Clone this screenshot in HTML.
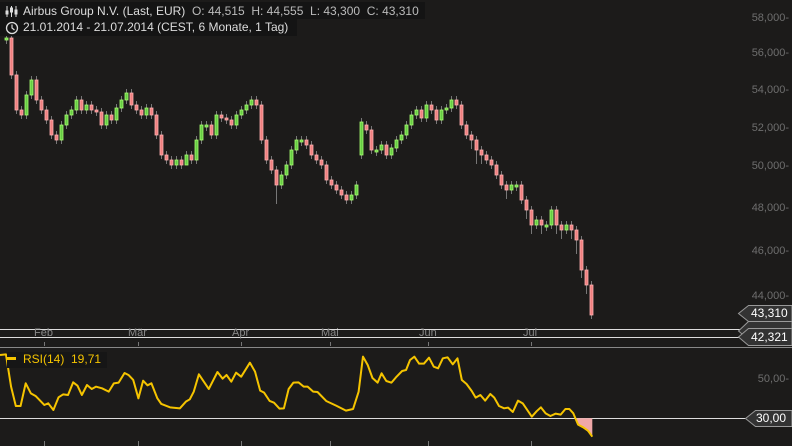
<!DOCTYPE html>
<html><head><meta charset="utf-8"><style>
html,body{margin:0;padding:0;background:#1c1b1a;width:792px;height:446px;overflow:hidden;font-family:"Liberation Sans",sans-serif}
.t{position:absolute;font-size:12px;color:#ddd;white-space:nowrap}
.ax{position:absolute;font-size:11px;color:#6e6e6e;white-space:nowrap}
.g{fill:#66cc44;stroke:#a8ff70;stroke-width:0.8}
.r{fill:#f08080;stroke:#ffb0b0;stroke-width:0.8}
</style></head><body>
<svg width="792" height="446" style="position:absolute;left:0;top:0">
<path stroke="#777" stroke-width="1" fill="none" d="M6.5 34V44M11.5 34V79M16.5 71V114M21.5 106V119M26.5 91V119M31.5 76V99M36.5 76V104M41.5 96V114M46.5 106V124M51.5 116V139M56.5 131V144M61.5 121V144M66.5 111V129M71.5 106V119M76.5 96V114M81.5 96V114M86.5 101V114M91.5 101V114M96.5 106V116M101.5 108V129M106.5 111V129M111.5 111V124M116.5 104V124M121.5 96V112M126.5 89V104M131.5 89V109M136.5 101V114M141.5 106V119M146.5 104V119M151.5 104V119M156.5 111V139M161.5 131V159M166.5 151V164M171.5 156V169M176.5 156V169M181.5 156V169M186.5 151V164M191.5 151V164M196.5 136V164M201.5 121V144M206.5 121V131M211.5 121V139M216.5 111V139M221.5 111V122M226.5 114V124M231.5 116V129M236.5 111V129M241.5 106V119M246.5 101V114M251.5 96V109M256.5 96V109M261.5 101V144M266.5 136V164M271.5 156V174M276.5 166V204M281.5 171V189M286.5 161V179M291.5 146V169M296.5 136V154M301.5 136V146M306.5 136V149M311.5 141V159M316.5 151V164M321.5 156V169M326.5 161V184M331.5 176V189M336.5 181V194M341.5 186V199M346.5 191V204M351.5 191V204M356.5 181V199M361.5 118V159M366.5 121V134M371.5 126V154M376.5 146V156M381.5 141V154M386.5 141V159M391.5 144V159M396.5 136V152M401.5 131V144M406.5 121V139M411.5 111V129M416.5 106V119M421.5 106V122M426.5 101V122M431.5 101V114M436.5 106V124M441.5 106V124M446.5 104V114M451.5 96V112M456.5 96V109M461.5 101V129M466.5 121V139M471.5 131V149M476.5 136V164M481.5 146V164M486.5 151V164M491.5 156V169M496.5 161V179M501.5 171V189M506.5 181V199M511.5 181V194M516.5 181V191M521.5 181V204M526.5 196V219M531.5 206V234M536.5 216V229M541.5 216V234M546.5 221V231M551.5 206V229M556.5 206V234M561.5 221V239M566.5 221V234M571.5 221V239M576.5 226V254M581.5 236V278M586.5 266V294M591.5 281V319"/>
<rect class="g" x="5" y="38" width="3" height="2"/>
<rect class="r" x="10" y="38" width="3" height="37"/>
<rect class="r" x="15" y="75" width="3" height="35"/>
<rect class="r" x="20" y="110" width="3" height="5"/>
<rect class="g" x="25" y="95" width="3" height="20"/>
<rect class="g" x="30" y="80" width="3" height="15"/>
<rect class="r" x="35" y="80" width="3" height="20"/>
<rect class="r" x="40" y="100" width="3" height="10"/>
<rect class="r" x="45" y="110" width="3" height="10"/>
<rect class="r" x="50" y="120" width="3" height="15"/>
<rect class="r" x="55" y="135" width="3" height="5"/>
<rect class="g" x="60" y="125" width="3" height="15"/>
<rect class="g" x="65" y="115" width="3" height="10"/>
<rect class="g" x="70" y="110" width="3" height="5"/>
<rect class="g" x="75" y="100" width="3" height="10"/>
<rect class="r" x="80" y="100" width="3" height="10"/>
<rect class="g" x="85" y="105" width="3" height="5"/>
<rect class="r" x="90" y="105" width="3" height="5"/>
<rect class="r" x="95" y="110" width="3" height="2"/>
<rect class="r" x="100" y="112" width="3" height="13"/>
<rect class="g" x="105" y="115" width="3" height="10"/>
<rect class="r" x="110" y="115" width="3" height="5"/>
<rect class="g" x="115" y="108" width="3" height="12"/>
<rect class="g" x="120" y="100" width="3" height="8"/>
<rect class="g" x="125" y="93" width="3" height="7"/>
<rect class="r" x="130" y="93" width="3" height="12"/>
<rect class="r" x="135" y="105" width="3" height="5"/>
<rect class="r" x="140" y="110" width="3" height="5"/>
<rect class="g" x="145" y="108" width="3" height="7"/>
<rect class="r" x="150" y="108" width="3" height="7"/>
<rect class="r" x="155" y="115" width="3" height="20"/>
<rect class="r" x="160" y="135" width="3" height="20"/>
<rect class="r" x="165" y="155" width="3" height="5"/>
<rect class="r" x="170" y="160" width="3" height="5"/>
<rect class="g" x="175" y="160" width="3" height="5"/>
<rect class="r" x="180" y="160" width="3" height="5"/>
<rect class="g" x="185" y="155" width="3" height="10"/>
<rect class="r" x="190" y="155" width="3" height="5"/>
<rect class="g" x="195" y="140" width="3" height="20"/>
<rect class="g" x="200" y="125" width="3" height="15"/>
<rect class="g" x="205" y="125" width="3" height="2"/>
<rect class="r" x="210" y="125" width="3" height="10"/>
<rect class="g" x="215" y="115" width="3" height="20"/>
<rect class="r" x="220" y="115" width="3" height="3"/>
<rect class="r" x="225" y="118" width="3" height="2"/>
<rect class="r" x="230" y="120" width="3" height="5"/>
<rect class="g" x="235" y="115" width="3" height="10"/>
<rect class="g" x="240" y="110" width="3" height="5"/>
<rect class="g" x="245" y="105" width="3" height="5"/>
<rect class="g" x="250" y="100" width="3" height="5"/>
<rect class="r" x="255" y="100" width="3" height="5"/>
<rect class="r" x="260" y="105" width="3" height="35"/>
<rect class="r" x="265" y="140" width="3" height="20"/>
<rect class="r" x="270" y="160" width="3" height="10"/>
<rect class="r" x="275" y="170" width="3" height="15"/>
<rect class="g" x="280" y="175" width="3" height="10"/>
<rect class="g" x="285" y="165" width="3" height="10"/>
<rect class="g" x="290" y="150" width="3" height="15"/>
<rect class="g" x="295" y="140" width="3" height="10"/>
<rect class="g" x="300" y="140" width="3" height="2"/>
<rect class="r" x="305" y="140" width="3" height="5"/>
<rect class="r" x="310" y="145" width="3" height="10"/>
<rect class="r" x="315" y="155" width="3" height="5"/>
<rect class="r" x="320" y="160" width="3" height="5"/>
<rect class="r" x="325" y="165" width="3" height="15"/>
<rect class="r" x="330" y="180" width="3" height="5"/>
<rect class="r" x="335" y="185" width="3" height="5"/>
<rect class="r" x="340" y="190" width="3" height="5"/>
<rect class="r" x="345" y="195" width="3" height="5"/>
<rect class="g" x="350" y="195" width="3" height="5"/>
<rect class="g" x="355" y="185" width="3" height="10"/>
<rect class="g" x="360" y="122" width="3" height="33"/>
<rect class="r" x="365" y="125" width="3" height="5"/>
<rect class="r" x="370" y="130" width="3" height="20"/>
<rect class="g" x="375" y="150" width="3" height="2"/>
<rect class="g" x="380" y="145" width="3" height="5"/>
<rect class="r" x="385" y="145" width="3" height="10"/>
<rect class="g" x="390" y="148" width="3" height="7"/>
<rect class="g" x="395" y="140" width="3" height="8"/>
<rect class="g" x="400" y="135" width="3" height="5"/>
<rect class="g" x="405" y="125" width="3" height="10"/>
<rect class="g" x="410" y="115" width="3" height="10"/>
<rect class="g" x="415" y="110" width="3" height="5"/>
<rect class="r" x="420" y="110" width="3" height="8"/>
<rect class="g" x="425" y="105" width="3" height="13"/>
<rect class="r" x="430" y="105" width="3" height="5"/>
<rect class="r" x="435" y="110" width="3" height="10"/>
<rect class="g" x="440" y="110" width="3" height="10"/>
<rect class="g" x="445" y="108" width="3" height="2"/>
<rect class="g" x="450" y="100" width="3" height="8"/>
<rect class="r" x="455" y="100" width="3" height="5"/>
<rect class="r" x="460" y="105" width="3" height="20"/>
<rect class="r" x="465" y="125" width="3" height="10"/>
<rect class="r" x="470" y="135" width="3" height="5"/>
<rect class="r" x="475" y="140" width="3" height="10"/>
<rect class="r" x="480" y="150" width="3" height="5"/>
<rect class="r" x="485" y="155" width="3" height="5"/>
<rect class="r" x="490" y="160" width="3" height="5"/>
<rect class="r" x="495" y="165" width="3" height="10"/>
<rect class="r" x="500" y="175" width="3" height="10"/>
<rect class="r" x="505" y="185" width="3" height="5"/>
<rect class="g" x="510" y="185" width="3" height="5"/>
<rect class="g" x="515" y="185" width="3" height="2"/>
<rect class="r" x="520" y="185" width="3" height="15"/>
<rect class="r" x="525" y="200" width="3" height="10"/>
<rect class="r" x="530" y="210" width="3" height="15"/>
<rect class="g" x="535" y="220" width="3" height="5"/>
<rect class="r" x="540" y="220" width="3" height="5"/>
<rect class="g" x="545" y="225" width="3" height="2"/>
<rect class="g" x="550" y="210" width="3" height="15"/>
<rect class="r" x="555" y="210" width="3" height="15"/>
<rect class="r" x="560" y="225" width="3" height="5"/>
<rect class="g" x="565" y="225" width="3" height="5"/>
<rect class="r" x="570" y="225" width="3" height="5"/>
<rect class="r" x="575" y="230" width="3" height="10"/>
<rect class="r" x="580" y="240" width="3" height="30"/>
<rect class="r" x="585" y="270" width="3" height="15"/>
<rect class="r" x="590" y="285" width="3" height="30"/>
<line x1="0" y1="329.5" x2="740" y2="329.5" stroke="#ddd" stroke-width="1"/>
<line x1="0" y1="337.5" x2="740" y2="337.5" stroke="#ddd" stroke-width="1"/>
<line x1="0" y1="347.5" x2="792" y2="347.5" stroke="#888" stroke-width="1"/>
<line x1="0" y1="418.5" x2="748" y2="418.5" stroke="#ddd" stroke-width="1"/>
<g stroke="#777"><line x1="44.5" y1="342" x2="44.5" y2="346"/><line x1="138.5" y1="342" x2="138.5" y2="346"/><line x1="241.5" y1="342" x2="241.5" y2="346"/><line x1="330.5" y1="342" x2="330.5" y2="346"/><line x1="428.5" y1="342" x2="428.5" y2="346"/><line x1="531.5" y1="342" x2="531.5" y2="346"/>
<line x1="44.5" y1="441" x2="44.5" y2="446"/><line x1="138.5" y1="441" x2="138.5" y2="446"/><line x1="241.5" y1="441" x2="241.5" y2="446"/><line x1="330.5" y1="441" x2="330.5" y2="446"/><line x1="428.5" y1="441" x2="428.5" y2="446"/><line x1="531.5" y1="441" x2="531.5" y2="446"/></g>
<polygon points="575.3,418.3 579,425 583,428 587,431 592.3,436.7 592.3,418.3" fill="#f0a8a8"/>
<g transform="translate(0,320) scale(0.3954,0.3333)">
<path fill="none" stroke="#f5c400" stroke-width="2" vector-effect="non-scaling-stroke" stroke-linejoin="round" d="M0,105 L15,103 L28,200 L40,258 L52,258 L65,190 L78,220 L90,228 L112,255 L122,250 L135,270 L148,232 L160,223 L172,225 L185,187 L196,197 L207,225 L220,195 L232,207 L243,200 L258,205 L275,215 L288,190 L300,188 L315,159 L325,165 L337,180 L350,235 L362,182 L373,196 L383,190 L398,235 L408,252 L430,262 L455,265 L470,245 L480,238 L490,215 L503,163 L528,207 L550,156 L563,176 L573,165 L585,185 L597,158 L610,170 L632,128 L645,155 L658,212 L668,218 L682,243 L693,248 L707,266 L718,265 L730,207 L742,188 L755,187 L768,200 L778,200 L792,215 L803,216 L825,243 L850,257 L875,272 L893,267 L907,215 L918,110 L930,135 L942,174 L955,188 L965,160 L977,183 L990,188 L1003,170 L1017,153 L1027,150 L1037,120 L1048,110 L1060,131 L1072,131 L1085,113 L1097,140 L1108,145 L1120,115 L1132,112 L1145,133 L1157,115 L1168,180 L1180,192 L1193,213 L1203,233 L1215,225 L1227,242 L1240,222 L1250,233 L1262,258 L1275,265 L1285,263 L1297,276 L1310,242 L1322,250 L1345,290 L1357,274 L1368,262 L1380,280 L1392,288 L1405,281 L1418,284 L1430,267 L1440,267 L1450,280 L1462,314 L1475,322 L1487,332 L1498,350"/>
</g>
<g fill="#333" stroke="#999" stroke-width="1">
<polygon points="748.5,321.5 738.5,331 748.5,339.5 792,339.5 792,321.5"/>
<polygon points="748.5,305.5 738.5,313.5 748.5,321.5 792,321.5 792,305.5"/>
<polygon points="748.5,328.5 738.5,337 748.5,345.5 792,345.5 792,328.5"/>
<polygon points="755.5,410.5 745.5,418.5 755.5,426.5 792,426.5 792,410.5"/>
</g>
</svg>
<div style="position:absolute;left:0;top:2px;width:425px;height:17px;background:#141414"></div>
<div style="position:absolute;left:0;top:19px;width:297px;height:17px;background:#141414"></div>
<svg style="position:absolute;left:5px;top:5px" width="14" height="13"><g stroke="#ddd" stroke-width="1" fill="none"><line x1="2" y1="1" x2="2" y2="12"/><rect x="1" y="6" width="2" height="3"/><line x1="6.5" y1="1" x2="6.5" y2="12"/><rect x="5.5" y="3" width="2" height="4"/><line x1="11" y1="1" x2="11" y2="12"/><rect x="10" y="5" width="2" height="4"/></g></svg>
<div class="t" style="left:23px;top:4px">Airbus Group N.V. (Last, EUR)&nbsp; <span style="color:#bbb">O: 44,515&nbsp; H: 44,555&nbsp; L: 43,300&nbsp; C: 43,310</span></div>
<svg style="position:absolute;left:5px;top:21px" width="14" height="14"><circle cx="7" cy="7" r="5.5" stroke="#ddd" stroke-width="1.3" fill="none"/><path d="M7 3.5V7L9.5 9" stroke="#ddd" stroke-width="1.2" fill="none"/></svg>
<div class="t" style="left:23px;top:20px">21.01.2014 - 21.07.2014 (CEST, 6 Monate, 1 Tag)</div>
<div class="ax" style="right:3px;top:12px">58,000-</div>
<div class="ax" style="right:3px;top:47px">56,000-</div>
<div class="ax" style="right:3px;top:84px">54,000-</div>
<div class="ax" style="right:3px;top:122px">52,000-</div>
<div class="ax" style="right:3px;top:160px">50,000-</div>
<div class="ax" style="right:3px;top:202px">48,000-</div>
<div class="ax" style="right:3px;top:245px">46,000-</div>
<div class="ax" style="right:3px;top:290px">44,000-</div>
<div class="ax" style="right:3px;top:373px">50,00-</div>
<div class="ax" style="left:34px;top:327px;color:#888">Feb</div>
<div class="ax" style="left:128px;top:327px;color:#888">Mär</div>
<div class="ax" style="left:232px;top:327px;color:#888">Apr</div>
<div class="ax" style="left:321px;top:327px;color:#888">Mai</div>
<div class="ax" style="left:419px;top:327px;color:#888">Jun</div>
<div class="ax" style="left:523px;top:327px;color:#888">Jul</div>
<div class="t" style="left:751px;top:306px;color:#fff">43,310</div>
<div class="t" style="left:751px;top:330px;color:#fff">42,321</div>
<div class="t" style="left:756px;top:411px;color:#fff">30,00</div>
<div style="position:absolute;left:7px;top:352px;width:100px;height:16px;background:#161616"></div>
<div style="position:absolute;left:7px;top:357px;width:9px;height:3px;background:#f5c400"></div>
<div class="t" style="left:23px;top:352px;color:#f5c400">RSI(14)&nbsp; 19,71</div>
</body></html>
